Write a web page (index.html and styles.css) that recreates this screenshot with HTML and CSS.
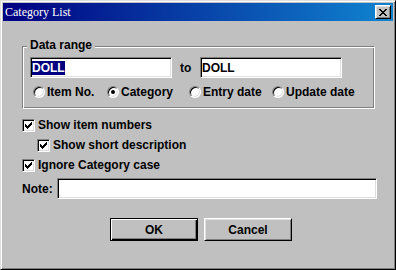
FILE: index.html
```html
<!DOCTYPE html>
<html lang="en">
<head>
  <meta charset="UTF-8">
  <title>Category List</title>
  <link rel="stylesheet" href="styles.css">
</head>
<body>
  <div class="window">
    <div class="titlebar">
      <span class="title">Category List</span>
      <span class="close">
        <svg width="8" height="7" viewBox="0 0 8 7" shape-rendering="crispEdges"><path d="M0 0h2v1H0zM6 0h2v1H6zM1 1h2v1H1zM5 1h2v1H5zM2 2h4v1H2zM3 3h2v1H3zM2 4h4v1H2zM1 5h2v1H1zM5 5h2v1H5zM0 6h2v1H0zM6 6h2v1H6z"/></svg>
      </span>
    </div>

    <div class="content">
      <div class="group">
        <span class="legend">Data range</span>
        <div class="range">
          <div class="field"><span class="sel">DOLL</span></div>
          <span class="to">to</span>
          <div class="field">DOLL</div>
        </div>
        <div class="radios">
          <span class="radio r1"><span class="circle"></span>Item No.</span>
          <span class="radio r2"><span class="circle on"></span>Category</span>
          <span class="radio r3"><span class="circle"></span>Entry date</span>
          <span class="radio"><span class="circle"></span>Update date</span>
        </div>
      </div>

      <div class="check">
        <span class="box"><svg width="7" height="7" viewBox="0 0 7 7" shape-rendering="crispEdges"><path d="M6 0h1v1H6zM5 1h2v1H5zM0 2h1v1H0zM4 2h3v1H4zM0 3h2v1H0zM3 3h3v1H3zM0 4h5v1H0zM1 5h3v1H1zM2 6h1v1H2z"/></svg></span>
        Show item numbers
      </div>
      <div class="check indent">
        <span class="box"><svg width="7" height="7" viewBox="0 0 7 7" shape-rendering="crispEdges"><path d="M6 0h1v1H6zM5 1h2v1H5zM0 2h1v1H0zM4 2h3v1H4zM0 3h2v1H0zM3 3h3v1H3zM0 4h5v1H0zM1 5h3v1H1zM2 6h1v1H2z"/></svg></span>
        Show short description
      </div>
      <div class="check">
        <span class="box"><svg width="7" height="7" viewBox="0 0 7 7" shape-rendering="crispEdges"><path d="M6 0h1v1H6zM5 1h2v1H5zM0 2h1v1H0zM4 2h3v1H4zM0 3h2v1H0zM3 3h3v1H3zM0 4h5v1H0zM1 5h3v1H1zM2 6h1v1H2z"/></svg></span>
        Ignore Category case
      </div>

      <div class="note">
        <span class="note-label">Note:</span>
        <div class="field wide"></div>
      </div>

      <div class="buttons">
        <span class="btn default">OK</span>
        <span class="btn">Cancel</span>
      </div>
    </div>
  </div>
</body>
</html>
```

FILE: styles.css
```css
body {
  margin: 0;
  font-family: "Liberation Sans", Arial, sans-serif;
  font-size: 12px;
  font-weight: bold;
  color: #000;
  background: #c0c0c0;
}
.window {
  width: 396px;
  height: 270px;
  box-sizing: border-box;
  padding: 2px;
  background: #c0c0c0;
  border: 1px solid;
  border-color: #dfdfdf #000 #000 #dfdfdf;
  box-shadow: inset 1px 1px #fff, inset -1px -1px #808080;
}
.titlebar {
  height: 18px;
  display: flex;
  align-items: center;
  justify-content: space-between;
  padding: 0 2px;
  background: linear-gradient(to right, #000080, #1084d0);
}
.title {
  font-family: "Liberation Serif", "Times New Roman", serif;
  font-weight: normal;
  font-size: 12px;
  color: #fff;
}
.close {
  width: 16px;
  height: 14px;
  box-sizing: border-box;
  display: flex;
  align-items: center;
  justify-content: center;
  background: #c0c0c0;
  border: 1px solid;
  border-color: #fff #000 #000 #fff;
  box-shadow: inset 1px 1px #dfdfdf, inset -1px -1px #808080;
}
.content {
  padding: 0 16px 0 19px;
}
.group {
  position: relative;
  margin: 25px 2px 0 0;
  height: 63px;
  box-sizing: border-box;
  padding: 10px 7px 0;
  border: 1px solid;
  border-color: #808080 #fff #fff #808080;
  box-shadow: inset 1px 1px #fff, inset -1px -1px #808080;
}
.legend {
  position: absolute;
  top: -9px;
  left: 4px;
  padding: 0 3px;
  line-height: 14px;
  background: #c0c0c0;
}
.range {
  display: flex;
  align-items: center;
}
.field {
  width: 142px;
  height: 21px;
  box-sizing: border-box;
  display: flex;
  align-items: center;
  padding-left: 1px;
  background: #fff;
  border: 1px solid;
  border-color: #808080 #fff #fff #808080;
  box-shadow: inset 1px 1px #000, inset -1px -1px #dfdfdf;
  line-height: 14px;
}
.field.wide {
  width: auto;
  flex: 1;
}
.sel {
  background: #000080;
  color: #fff;
}
.to {
  width: 20px;
  padding-left: 8px;
}
.radios {
  display: flex;
  margin: 7px 0 0 3px;
  line-height: 14px;
}
.radio {
  display: flex;
  align-items: center;
  gap: 2px;
}
.r1 { width: 74px; }
.r2 { width: 82px; }
.r3 { width: 83px; }
.circle {
  width: 12px;
  height: 12px;
  box-sizing: border-box;
  border-radius: 50%;
  background: #fff;
  border: 1px solid;
  border-color: #808080 #fff #fff #808080;
  box-shadow: inset 1px 1px #000, inset -1px -1px #dfdfdf;
  display: flex;
  align-items: center;
  justify-content: center;
}
.circle.on::after {
  content: "";
  width: 4px;
  height: 4px;
  border-radius: 50%;
  background: #000;
}
.check {
  height: 20px;
  display: flex;
  align-items: center;
  gap: 3px;
}
.group + .check {
  margin-top: 6px;
}
.check.indent {
  padding-left: 15px;
}
.box {
  width: 13px;
  height: 13px;
  box-sizing: border-box;
  display: flex;
  align-items: center;
  justify-content: center;
  background: #fff;
  border: 1px solid;
  border-color: #808080 #fff #fff #808080;
  box-shadow: inset 1px 1px #000, inset -1px -1px #dfdfdf;
}
.note {
  display: flex;
  align-items: center;
  margin-top: 3px;
}
.note-label {
  width: 35px;
}
.buttons {
  display: flex;
  gap: 6px;
  margin: 19px 0 0 88px;
}
.btn {
  width: 88px;
  height: 23px;
  box-sizing: border-box;
  display: flex;
  align-items: center;
  justify-content: center;
  border: 1px solid;
  border-color: #fff #000 #000 #fff;
  box-shadow: inset 1px 1px #dfdfdf, inset -1px -1px #808080;
}
.btn.default {
  border-color: #000;
  box-shadow: inset 1px 1px #fff, inset -1px -1px #000, inset -2px -2px #808080;
}
```
